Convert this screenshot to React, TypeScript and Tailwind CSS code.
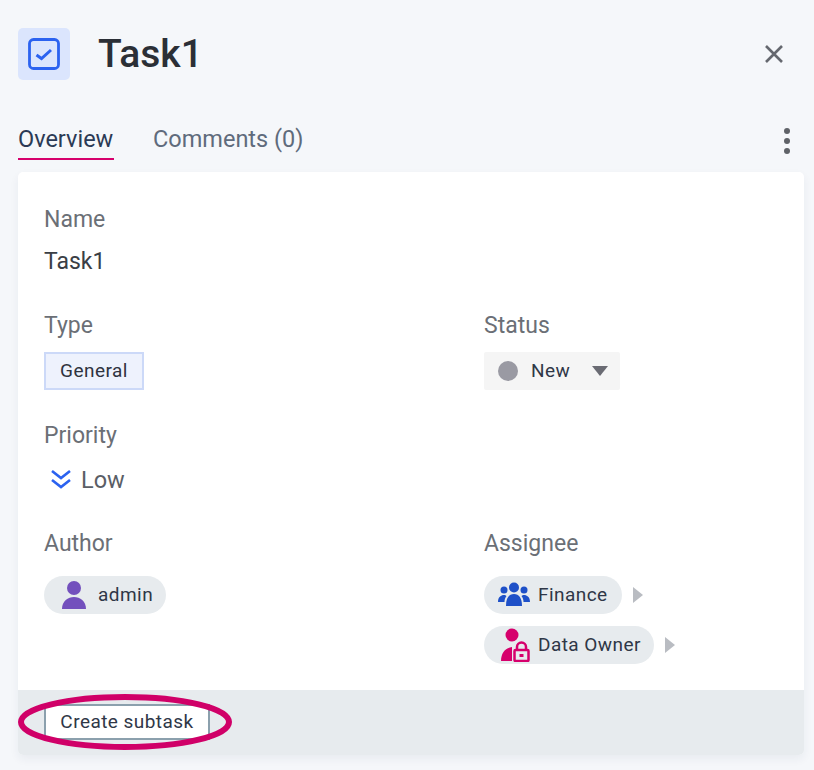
function Label({ children }: { children: React.ReactNode }) {
  return <div className="text-[23px] leading-[28px] text-[#6b6f76]">{children}</div>;
}

function Caret() {
  return (
    <svg width="10" height="16" viewBox="0 0 10 16" className="ml-[11px]">
      <path d="M0 0 L10 8 L0 16 Z" fill="#b9bcc2" />
    </svg>
  );
}

function UserIcon() {
  return (
    <svg width="28" height="32" viewBox="0 0 28 32">
      <circle cx="14" cy="9" r="7" fill="#7350bd" />
      <path d="M2 30 C2 22 8 18 14 18 C20 18 26 22 26 30 Z" fill="#7350bd" />
    </svg>
  );
}

function GroupIcon() {
  return (
    <svg width="32" height="26" viewBox="0 0 32 26" fill="#1e50c8">
      <circle cx="16" cy="5.5" r="5" />
      <circle cx="6" cy="8" r="3.5" />
      <circle cx="26" cy="8" r="3.5" />
      <path d="M8 24 C8 16 11 12 16 12 C21 12 24 16 24 24 Z" />
      <path d="M0 20 C0 15 3 13 6 13 C7 13 8 13.5 8.5 14 C7 16 6.5 18 6.5 20 Z" />
      <path d="M32 20 C32 15 29 13 26 13 C25 13 24 13.5 23.5 14 C25 16 25.5 18 25.5 20 Z" />
    </svg>
  );
}

function OwnerIcon() {
  return (
    <svg width="30" height="34" viewBox="0 0 30 34" fill="#d6006c">
      <circle cx="12" cy="7" r="6.5" />
      <path d="M1 33 C1 25 5 20 12 19 L12 33 Z" />
      <path d="M17 22 V19 a4.5 4.5 0 0 1 9 0 v3" fill="none" stroke="#d6006c" strokeWidth="2.5" />
      <rect x="14.5" y="22" width="14" height="11" rx="1" fill="none" stroke="#d6006c" strokeWidth="2.5" />
      <rect x="19.5" y="26" width="4" height="3" />
    </svg>
  );
}

export default function App() {
  return (
    <div className="relative h-[770px] w-[814px] overflow-hidden bg-[#f5f7fa] font-['Roboto',sans-serif]">
      <div className="flex items-center pl-[18px] pr-[30px] pt-[28px]">
        <div className="flex h-[52px] w-[52px] items-center justify-center rounded-[5px] bg-[#dbe5fd]">
          <svg width="32" height="32" viewBox="0 0 32 32" fill="none" stroke="#2b62f0">
            <rect x="1.5" y="1.5" width="29" height="29" rx="4" strokeWidth="2.8" />
            <path d="M8.5 17 L13.5 20.5 L23 12" strokeWidth="3" />
          </svg>
        </div>
        <h1 className="ml-[28px] text-[39px] font-medium leading-[52px] text-[#2b2f36]">Task1</h1>
        <svg className="ml-auto" width="20" height="20" viewBox="0 0 20 20" stroke="#65686f" strokeWidth="2.6">
          <path d="M2 2 L18 18 M18 2 L2 18" />
        </svg>
      </div>

      <div className="mt-[40px] flex items-start pl-[18px] pr-[24px]">
        <div className="h-[40px] w-[96px] whitespace-nowrap border-b-2 border-[#d6006c] text-[23.5px] leading-[38px] text-[#2b3a55]">
          Overview
        </div>
        <div className="ml-[39px] text-[23.5px] leading-[38px] text-[#5f6b7c]">Comments (0)</div>
        <div className="ml-auto mt-[8px] flex flex-col gap-[4px]">
          <span className="h-[6px] w-[6px] rounded-full bg-[#5f6268]" />
          <span className="h-[6px] w-[6px] rounded-full bg-[#5f6268]" />
          <span className="h-[6px] w-[6px] rounded-full bg-[#5f6268]" />
        </div>
      </div>

      <div className="mx-[18px] mt-[12px] flex h-[583px] w-[786px] flex-col overflow-hidden rounded-[5px] bg-white shadow-[0_4px_10px_rgba(30,50,80,0.06)]">
        <div className="flex-1 pl-[26px] pt-[34px]">
          <Label>Name</Label>
          <div className="mt-[14px] text-[23px] leading-[28px] text-[#3a3e45]">Task1</div>

          <div className="mt-[36px] grid grid-cols-[440px_1fr]">
            <div>
              <Label>Type</Label>
              <div className="mt-[12px] flex h-[38px] w-[100px] items-center justify-center border-2 border-[#ccd9f8] bg-[#eef2fd] text-[19px] tracking-[0.45px] text-[#2f3340]">
                General
              </div>
            </div>
            <div>
              <Label>Status</Label>
              <div className="mt-[12px] flex h-[38px] w-[136px] items-center rounded-[2px] bg-[#f5f5f5] pl-[14px]">
                <span className="h-[20px] w-[20px] rounded-full bg-[#9a9aa3]" />
                <span className="ml-[13px] text-[19px] tracking-[0.45px] text-[#2f3747]">New</span>
                <svg className="ml-[22px]" width="16" height="10" viewBox="0 0 16 10">
                  <path d="M0 0 H16 L8 10 Z" fill="#6a6b73" />
                </svg>
              </div>
            </div>
          </div>

          <div className="mt-[32px]">
            <Label>Priority</Label>
            <div className="mt-[16px] flex items-center pl-[6px]">
              <svg width="22" height="24" viewBox="0 0 22 24" fill="none" stroke="#2b62f0" strokeWidth="2.6">
                <path d="M2 3 L11 10 L20 3 M2 12 L11 19 L20 12" />
              </svg>
              <span className="ml-[9px] text-[23.5px] leading-[28px] text-[#5a5e66]">Low</span>
            </div>
          </div>

          <div className="mt-[36px] grid grid-cols-[440px_1fr]">
            <div>
              <Label>Author</Label>
              <div className="mt-[18px] flex h-[38px] w-[122px] items-center rounded-full bg-[#e7ebee] pl-[16px]">
                <UserIcon />
                <span className="ml-[10px] text-[19px] tracking-[0.45px] text-[#2f3747]">admin</span>
              </div>
            </div>
            <div>
              <Label>Assignee</Label>
              <div className="mt-[18px] flex flex-col gap-[12px]">
                <div className="flex items-center">
                  <div className="flex h-[38px] w-[138px] items-center rounded-full bg-[#e7ebee] pl-[14px]">
                    <GroupIcon />
                    <span className="ml-[8px] text-[19px] tracking-[0.45px] text-[#2f3747]">Finance</span>
                  </div>
                  <Caret />
                </div>
                <div className="flex items-center">
                  <div className="flex h-[38px] w-[170px] items-center rounded-full bg-[#e7ebee] pl-[16px]">
                    <OwnerIcon />
                    <span className="ml-[8px] text-[19px] tracking-[0.45px] text-[#2f3747]">Data Owner</span>
                  </div>
                  <Caret />
                </div>
              </div>
            </div>
          </div>
        </div>

        <div className="flex h-[65px] items-start bg-[#e7ebee] pl-[26px] pt-[14px]">
          <button className="flex h-[36px] w-[166px] items-center justify-center border-2 border-[#8ba0ad] bg-white text-[19px] tracking-[0.45px] text-[#2f3747]">
            Create subtask
          </button>
        </div>
      </div>

      {/* red annotation drawn over the button */}
      <svg className="absolute left-[18px] top-[692px]" width="216" height="60" viewBox="0 0 216 60" fill="none">
        <ellipse cx="107" cy="30" rx="104" ry="25" stroke="#d00068" strokeWidth="6" />
      </svg>
    </div>
  );
}
